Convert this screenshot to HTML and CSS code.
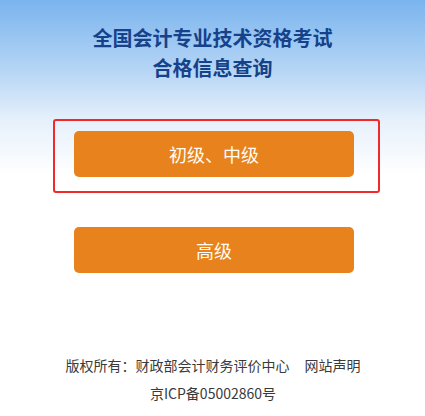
FILE: index.html
```html
<!DOCTYPE html>
<html lang="zh-CN">
<head>
<meta charset="utf-8">
<title>全国会计专业技术资格考试合格信息查询</title>
<link rel="stylesheet" href="styles.css">
</head>
<body>
<div class="page">
  <header class="title">
    <div>全国会计专业技术资格考试</div>
    <div>合格信息查询</div>
  </header>
  <main class="buttons">
    <a class="btn" href="#">初级、中级</a>
    <a class="btn" href="#">高级</a>
    <div class="highlight"></div>
  </main>
  <footer class="footer">
    <div>版权所有：财政部会计财务评价中心<span class="gap"></span>网站声明</div>
    <div>京ICP备05002860号</div>
  </footer>
</div>
</body>
</html>
```

FILE: styles.css
```css
html, body {
  margin: 0;
  padding: 0;
}
body {
  font-family: "Noto Sans CJK SC", "Noto Sans", sans-serif;
  background: #fff;
}
.page {
  min-height: 416px;
  background: linear-gradient(to bottom, #7ab4ee 0px, #b5d5f5 70px, #e6f0fb 120px, #ffffff 175px);
  padding-top: 23px;
  box-sizing: border-box;
}
.title {
  text-align: center;
  font-size: 20px;
  line-height: 30px;
  font-weight: bold;
  color: #15428a;
}
.buttons {
  position: relative;
  display: flex;
  flex-direction: column;
  align-items: center;
  gap: 50px;
  margin-top: 48px;
  padding-left: 3px;
}
.btn {
  display: flex;
  align-items: center;
  justify-content: center;
  width: 280px;
  height: 46px;
  border-radius: 5px;
  background: #e8821c;
  color: #fffdf6;
  font-size: 18px;
  text-decoration: none;
}
.highlight {
  position: absolute;
  left: 53px;
  top: -12px;
  width: 323px;
  height: 70px;
  border: 2px solid #f02a2a;
  border-radius: 3px;
  pointer-events: none;
}
.footer {
  margin-top: 78px;
  text-align: center;
  font-size: 14px;
  line-height: 28px;
  color: #3a3a3a;
  padding-left: 1px;
}
.gap {
  display: inline-block;
  width: 15px;
}
```
